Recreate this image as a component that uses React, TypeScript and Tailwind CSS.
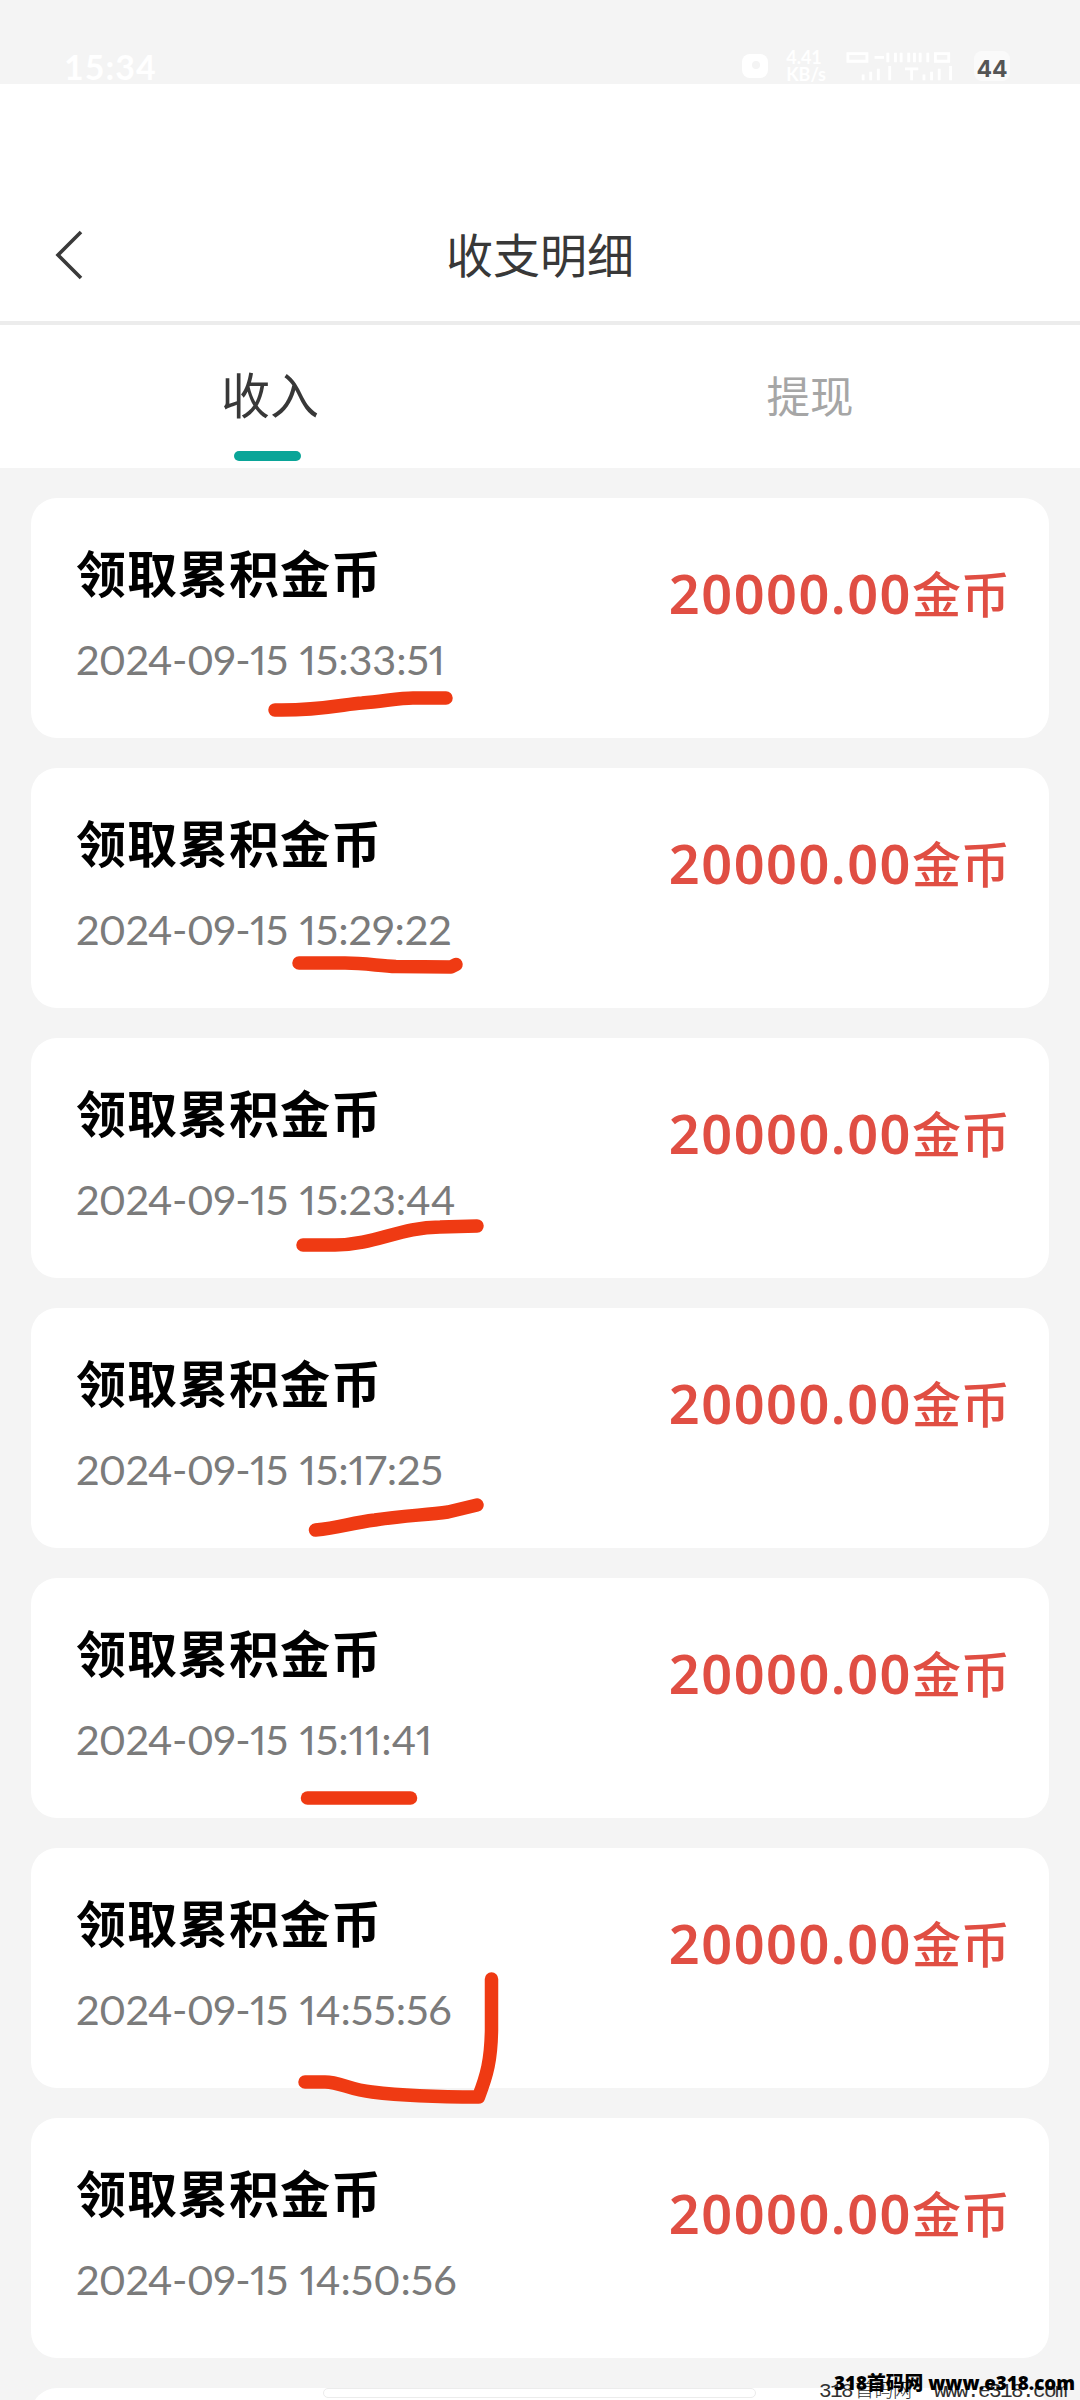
import clsx from 'clsx'

type Entry = {
  title: string
  date: string
  time: string
  amount: string
}

const entries: Entry[] = [
  { title: '领取累积金币', date: '2024-09-15', time: '15:33:51', amount: '20000.00' },
  { title: '领取累积金币', date: '2024-09-15', time: '15:29:22', amount: '20000.00' },
  { title: '领取累积金币', date: '2024-09-15', time: '15:23:44', amount: '20000.00' },
  { title: '领取累积金币', date: '2024-09-15', time: '15:17:25', amount: '20000.00' },
  { title: '领取累积金币', date: '2024-09-15', time: '15:11:41', amount: '20000.00' },
  { title: '领取累积金币', date: '2024-09-15', time: '14:55:56', amount: '20000.00' },
  { title: '领取累积金币', date: '2024-09-15', time: '14:50:56', amount: '20000.00' },
]

const tabs = [
  { label: '收入', active: true },
  { label: '提现', active: false },
]

// Hand-drawn pen marks, in page coordinates
const marks = [
  'M275 710 C318 711 345 704 362 703 C385 701 400 698 413 698 L446 698',
  'M299 963 L345 963 C365 963 380 966 396 966.5 L451 967 L456 964.5',
  'M303 1245 L335 1245 C375 1245 400 1227 440 1227 L477 1226',
  'M315.5 1530 C340 1528 350 1523 375 1520 C400 1516 425 1515 448 1512 L477 1505',
  'M307.5 1798 L410.5 1798',
  'M305 2082 L325 2082 C340 2082 350 2090 372 2092 C405 2096 440 2097 478.5 2097 C487 2075 491 2060 491.5 2030 L491.5 1979',
]

function StatusBar() {
  return (
    <div className="flex h-[84px] items-end justify-between pl-[64px] pr-[70px] text-white">
      <span className="text-[34px] font-bold leading-[34px] tracking-[1px]">15:34</span>
      <div className="flex h-[36px] items-center">
        <svg width="26" height="26" viewBox="0 0 26 26" className="mr-[18px]">
          <rect width="26" height="24" y="1" rx="8" fill="#fff" />
          <circle cx="14" cy="12" r="4" fill="#f4f4f4" />
        </svg>
        <div className="mr-5 text-[18px] font-bold leading-[17px]">
          <p>4.41</p>
          <p>KB/s</p>
        </div>
        <svg width="116" height="34" viewBox="0 0 122 34" className="mr-3">
          <g stroke="#fff" strokeWidth="3" fill="none">
            <path d="M2 4h20v8H2zM30 8h10M44 3v10M52 3v10M58 3v10M66 3v10M72 3v10M78 3v10M86 3v10M94 4h14v8H94z" />
            <path d="M18 32v-6M26 32v-9M34 32v-12M46 32v-15" />
            <path d="M62 20h14M69 20v12M82 32v-6M90 32v-9M98 32v-12M110 32v-15" />
          </g>
        </svg>
        <span className="flex h-[30px] w-[36px] items-center justify-center rounded-lg bg-[#fafafa] pt-[6px] font-[Inter] text-[23px] font-bold leading-none text-[#555]">
          44
        </span>
      </div>
    </div>
  )
}

function EntryCard({ entry }: { entry: Entry }) {
  return (
    <li className="flex h-[240px] justify-between rounded-[26px] bg-white pl-[45px] pr-[39px]">
      <div className="pt-[46px]">
        <h2 className="text-[50px] font-bold leading-[60px] tracking-[1px] text-black">
          {entry.title}
        </h2>
        <p className="mt-[25px] flex gap-[12px] whitespace-nowrap text-[41.5px] leading-[60px] text-[#7b7b7b] proportional-nums">
          <span className="tracking-[-0.7px]">{entry.date}</span>
          <span className="tracking-[-0.1px]">{entry.time}</span>
        </p>
      </div>
      <p className="flex pt-[66px] leading-[60px] text-[#e04e43]">
        <span className="mt-[-1px] font-['Noto_Sans'] text-[54px] font-semibold tracking-[1.5px]">
          {entry.amount}
        </span>
        <span className="text-[49px] font-medium">金币</span>
      </p>
    </li>
  )
}

export default function App() {
  return (
    <main className="relative h-[2400px] w-[1080px] overflow-hidden bg-[#f4f4f4] font-[Lato,'Noto_Sans_CJK_SC',sans-serif]">
      <StatusBar />

      <header className="grid h-[241px] grid-cols-3 items-center border-b-4 border-[#ececec] bg-white pt-[105px]">
        <svg
          width="32"
          height="54"
          viewBox="0 0 32 54"
          fill="none"
          stroke="#3a3a3a"
          strokeWidth="3.6"
          className="ml-[53px]"
        >
          <path d="M28 4 L5 27 L28 50" />
        </svg>
        <h1 className="text-center text-[47px] leading-[58px] text-[#383838]">收支明细</h1>
      </header>

      <nav className="flex h-[143px] bg-white">
        {tabs.map((tab) => (
          <div key={tab.label} className="flex flex-1 flex-col items-center pt-[40px]">
            <span
              className={clsx(
                'leading-[60px]',
                tab.active ? 'text-[49px] text-[#383838]' : 'pt-px text-[43.5px] text-[#a6a6a6]'
              )}
            >
              {tab.label}
            </span>
            {tab.active && (
              <span className="mr-[5px] mt-[26px] h-[10px] w-[67px] rounded-full bg-[#0aa598]" />
            )}
          </div>
        ))}
      </nav>

      <ul className="flex flex-col gap-[30px] px-[31px] pt-[30px]">
        {entries.map((entry) => (
          <EntryCard key={entry.time} entry={entry} />
        ))}
        <li className="h-[240px] rounded-[26px] bg-white" />
      </ul>

      <svg
        className="pointer-events-none absolute inset-0"
        width="1080"
        height="2400"
        viewBox="0 0 1080 2400"
        fill="none"
        stroke="#ef3a13"
        strokeWidth="13.5"
        strokeLinecap="round"
        strokeLinejoin="round"
      >
        {marks.map((d) => (
          <path key={d} d={d} />
        ))}
      </svg>

      {/* Home indicator */}
      <div className="absolute left-[323px] top-[2388px] h-[10px] w-[433px] rounded-full border border-[#ececec] bg-white" />

      <p className="absolute left-[819px] top-[2379px] flex whitespace-pre font-['Liberation_Mono','Noto_Sans_CJK_SC',monospace] text-[21px] leading-[26px] tracking-[-1.6px] text-[#333]">
        <span>318</span>
        <span className="ml-[3px] text-[19px] font-light tracking-normal">首码网</span>
        <span className="ml-[22px]">www.e318.com</span>
      </p>
      <p className="absolute left-[834px] top-[2371px] whitespace-nowrap font-['Noto_Sans','Noto_Sans_CJK_SC',sans-serif] text-[18.8px] font-black leading-[24px] text-black">
        318首码网 www.e318.com
      </p>
    </main>
  )
}
